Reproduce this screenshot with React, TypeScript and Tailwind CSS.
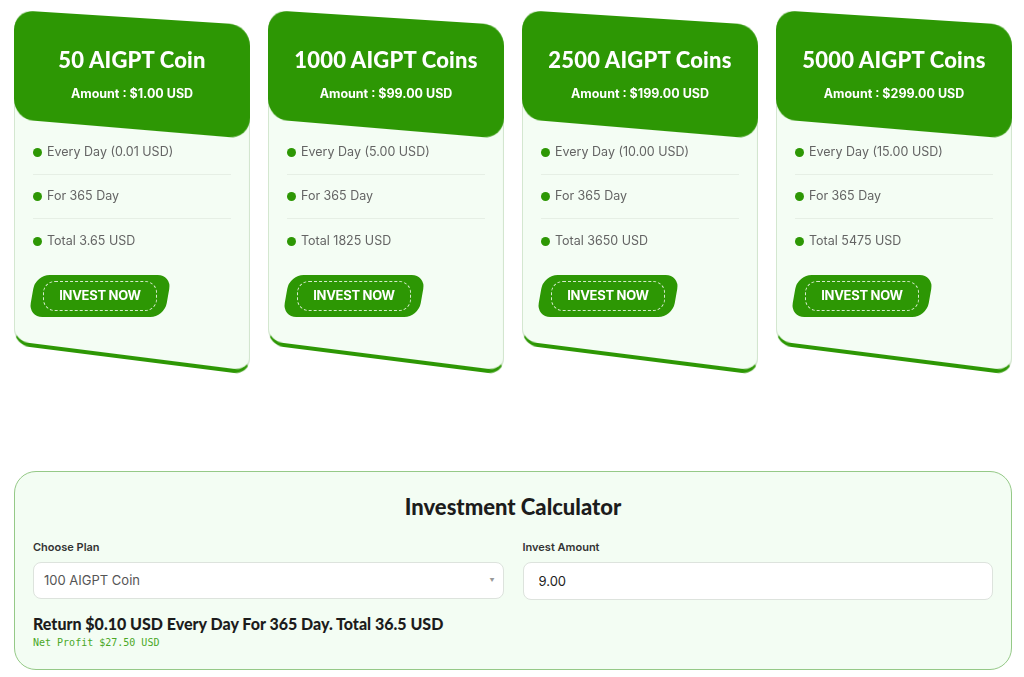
import React from "react";

type Plan = {
  title: string;
  amount: string;
  daily: string;
  total: string;
};

const plans: Plan[] = [
  { title: "50 AIGPT Coin", amount: "$1.00 USD", daily: "0.01 USD", total: "3.65 USD" },
  { title: "1000 AIGPT Coins", amount: "$99.00 USD", daily: "5.00 USD", total: "1825 USD" },
  { title: "2500 AIGPT Coins", amount: "$199.00 USD", daily: "10.00 USD", total: "3650 USD" },
  { title: "5000 AIGPT Coins", amount: "$299.00 USD", daily: "15.00 USD", total: "5475 USD" },
];

const heading = "font-['Lato','Noto_Sans',sans-serif]";
const body = "font-['Inter','Noto_Sans',sans-serif]";

function PlanCard({ plan }: { plan: Plan }) {
  const items = [`Every Day (${plan.daily})`, "For 365 Day", `Total ${plan.total}`];

  return (
    <div className="relative w-[236px] h-[365px] shrink-0">
      {/* tilted card background, content stays flat on top */}
      <div className="absolute top-0 left-0 w-[236px] h-[335px] origin-top-left [transform:matrix3d(0.9569,0.06082,0,-0.0001826,0,1,0,0,0,0,1,0,0,0,0,1)]">
        <div className="w-full h-full bg-[#f4fdf4] rounded-t-[20px] rounded-b-[16px] border border-[#d3e6cf] border-b-[4px] border-b-[#2d9704]" />
        <div className="absolute top-0 left-0 w-full h-[109px] bg-[#2d9704] rounded-[20px]" />
      </div>

      <div className="relative flex flex-col">
        <div className="pt-[36px] text-center text-white">
          <h3 className={`${heading} text-[22px] leading-[28px] font-black tracking-[0.2px]`}>{plan.title}</h3>
          <p className={`${body} mt-[11px] text-[12.5px] leading-[18px] font-bold`}>Amount : {plan.amount}</p>
        </div>

        <ul className={`${body} mt-[28px] px-[19px]`}>
          {items.map((text, i) => (
            <li
              key={text}
              className={`flex items-center gap-[5px] h-[44px] text-[12.5px] text-[#646464] ${
                i < items.length - 1 ? "border-b border-[#e6efe5]" : ""
              }`}
            >
              <span className="w-[9px] h-[9px] rounded-full bg-[#2d9704] shrink-0" />
              {text}
            </li>
          ))}
        </ul>

        <button className="relative mt-[12px] ml-[18px] w-[136px] h-[42px] flex items-center justify-center">
          <span className="absolute inset-0 bg-[#2d9704] rounded-[14px] -skew-x-[10deg]" />
          <span className="absolute top-[6px] bottom-[6px] left-[11px] right-[11px] rounded-[12px] border border-dashed border-white/80" />
          <span className={`${body} relative text-white text-[13px] font-bold tracking-[-0.3px]`}>INVEST NOW</span>
        </button>
      </div>
    </div>
  );
}

export default function App() {
  return (
    <div className="min-h-screen w-full bg-white">
      <div className="flex gap-[18px] pl-[14px] pt-[10px]">
        {plans.map((p) => (
          <PlanCard key={p.title} plan={p} />
        ))}
      </div>

      <div className="mt-[96px] ml-[14px] w-[998px] rounded-[22px] border border-[#95c987] bg-[#f3fdf3] px-[18px] pt-[20px] pb-[19px]">
        <h2 className={`${heading} text-center text-[22px] leading-[30px] font-black text-[#1c1c1c]`}>
          Investment Calculator
        </h2>

        <div className={`${body} mt-[17px] grid grid-cols-2 gap-[19px]`}>
          <div>
            <label className="block text-[11px] leading-[16px] font-semibold text-[#333]">Choose Plan</label>
            <div className="mt-[7px] h-[37px] rounded-[8px] border border-[#dde3dd] bg-white pl-[10px] pr-[8px] flex items-center justify-between">
              <span className="text-[13px] text-[#555]">100 AIGPT Coin</span>
              <span className="text-[5px] text-[#999]">▼</span>
            </div>
          </div>
          <div>
            <label className="block text-[11px] leading-[16px] font-semibold text-[#333]">Invest Amount</label>
            <input
              defaultValue="9.00"
              className="mt-[7px] w-full h-[38px] rounded-[8px] border border-[#dde3dd] bg-white px-[15px] text-[13px] text-[#222] outline-none"
            />
          </div>
        </div>

        <p className={`${heading} mt-[13px] text-[16px] leading-[22px] font-black text-[#1c1c1c]`}>
          Return $0.10 USD Every Day For 365 Day. Total 36.5 USD
        </p>
        <p className="mt-[1px] font-['DejaVu_Sans_Mono','Liberation_Mono',monospace] text-[10px] leading-[14px] text-[#4aa826]">
          Net Profit $27.50 USD
        </p>
      </div>
    </div>
  );
}
